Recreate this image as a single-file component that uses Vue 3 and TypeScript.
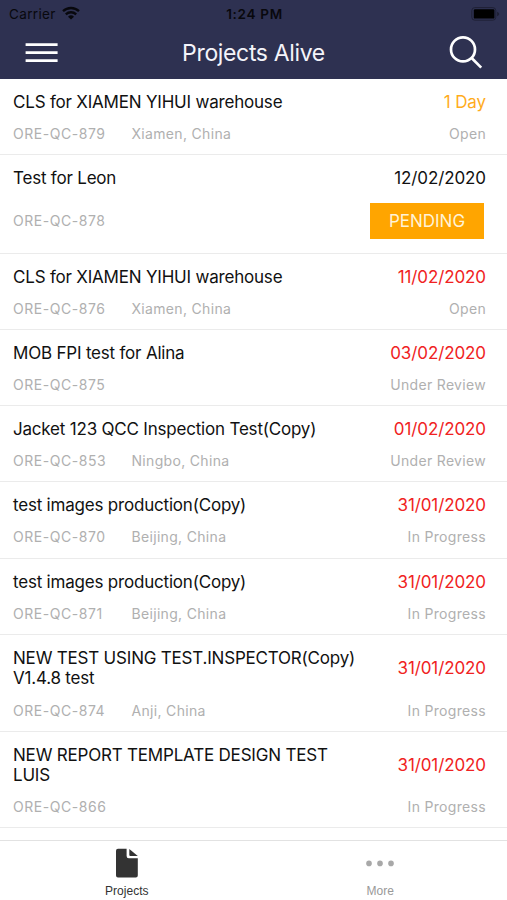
<script setup lang="ts">
type Tone = 'soon' | 'normal' | 'late'

interface Project {
  title: string
  code: string
  place?: string
  due: string
  tone: Tone
  status: string
  pending?: boolean
}

const projects: Project[] = [
  { title: 'CLS for XIAMEN YIHUI warehouse', code: 'ORE-QC-879', place: 'Xiamen, China', due: '1 Day', tone: 'soon', status: 'Open' },
  { title: 'Test for Leon', code: 'ORE-QC-878', due: '12/02/2020', tone: 'normal', status: 'PENDING', pending: true },
  { title: 'CLS for XIAMEN YIHUI warehouse', code: 'ORE-QC-876', place: 'Xiamen, China', due: '11/02/2020', tone: 'late', status: 'Open' },
  { title: 'MOB FPI test for Alina', code: 'ORE-QC-875', due: '03/02/2020', tone: 'late', status: 'Under Review' },
  { title: 'Jacket 123 QCC Inspection Test(Copy)', code: 'ORE-QC-853', place: 'Ningbo, China', due: '01/02/2020', tone: 'late', status: 'Under Review' },
  { title: 'test images production(Copy)', code: 'ORE-QC-870', place: 'Beijing, China', due: '31/01/2020', tone: 'late', status: 'In Progress' },
  { title: 'test images production(Copy)', code: 'ORE-QC-871', place: 'Beijing, China', due: '31/01/2020', tone: 'late', status: 'In Progress' },
  { title: 'NEW TEST USING TEST.INSPECTOR(Copy) V1.4.8 test', code: 'ORE-QC-874', place: 'Anji, China', due: '31/01/2020', tone: 'late', status: 'In Progress' },
  { title: 'NEW REPORT TEMPLATE DESIGN TEST LUIS', code: 'ORE-QC-866', due: '31/01/2020', tone: 'late', status: 'In Progress' },
]
</script>

<template>
  <div class="screen">
    <header class="top">
      <div class="statusbar">
        <div class="carrier">
          <span>Carrier</span>
          <svg class="wifi" viewBox="0 0 18 14" width="18" height="14">
            <path d="M1 5.2a11.6 11.6 0 0 1 16 0" />
            <path d="M3.8 8.3a7.6 7.6 0 0 1 10.4 0" />
            <path class="dot" d="M9 13.6 6 10.7a4.3 4.3 0 0 1 6 0Z" />
          </svg>
        </div>
        <span class="clock">1:24 PM</span>
        <svg class="battery" viewBox="0 0 29 14" width="29" height="14">
          <rect class="shell" x=".8" y=".6" width="24" height="12.6" rx="3" />
          <rect x="2.8" y="2.2" width="20.6" height="9.4" rx="1.2" />
          <path class="cap" d="M26 4.8c1.6.6 2.2 1.3 2.2 2.2s-.6 1.6-2.2 2.2Z" />
        </svg>
      </div>
      <div class="navbar">
        <button class="icon-button" type="button">
          <svg viewBox="0 0 34 22" width="34" height="22">
            <path class="bars" d="M1.6 2.6H33.6M1.6 10.6H33.6M1.6 18.7H33.6" />
          </svg>
        </button>
        <h1>Projects Alive</h1>
        <button class="icon-button" type="button">
          <svg viewBox="0 0 36 36" width="36" height="36">
            <circle class="lens" cx="15" cy="14.4" r="12" />
            <path class="lens" d="M23.4 22.8 33.2 32.6" />
          </svg>
        </button>
      </div>
    </header>

    <main class="list">
      <article v-for="p in projects" :key="p.code" class="row">
        <div class="line">
          <h2>{{ p.title }}</h2>
          <span class="due" :class="p.tone">{{ p.due }}</span>
        </div>
        <div class="line meta" :class="{ tall: p.pending }">
          <span class="code">{{ p.code }}</span>
          <span class="place">{{ p.place }}</span>
          <span :class="p.pending ? 'badge' : 'status'">{{ p.status }}</span>
        </div>
      </article>
    </main>

    <nav class="tabs">
      <a class="tab active">
        <svg viewBox="0 0 24 30" width="24" height="30">
          <path d="M3 .8H11.6V8.1A2.2 2.2 0 0 0 13.8 10.3H22.8V27.4A2 2 0 0 1 20.8 29.4H3A2 2 0 0 1 1 27.4V2.8A2 2 0 0 1 3 .8Z" />
          <path d="M14.3 1 22.8 7.9H15.3A1 1 0 0 1 14.3 6.9Z" />
        </svg>
        <span>Projects</span>
      </a>
      <a class="tab">
        <svg viewBox="0 0 30 30" width="30" height="30">
          <circle cx="4" cy="15.4" r="2.8" />
          <circle cx="15" cy="15.4" r="2.8" />
          <circle cx="26" cy="15.4" r="2.8" />
        </svg>
        <span>More</span>
      </a>
    </nav>
  </div>
</template>

<style>
body {
  background: #fff;
}
</style>

<style scoped>
.screen {
  display: flex;
  flex-direction: column;
  height: 900px;
  overflow: hidden;
  font-family: Inter, "Liberation Sans", sans-serif;
  color: #111;
}
h1,
h2 {
  margin: 0;
  font-weight: 400;
}
.top {
  flex: none;
  height: 79px;
  background: #2e3151;
}
.statusbar {
  display: grid;
  grid-template-columns: 1fr auto 1fr;
  align-items: center;
  height: 27px;
  padding: 0 7px 0 9px;
  font-size: 13.5px;
  color: #08080d;
}
.carrier {
  display: flex;
  align-items: center;
  gap: 6px;
  letter-spacing: 0.35px;
}
.wifi {
  margin-top: -2px;
  fill: none;
  stroke: #08080d;
  stroke-width: 2.3;
}
.wifi .dot {
  fill: #08080d;
  stroke: none;
}
.clock {
  font-weight: 600;
  letter-spacing: 0.7px;
}
.battery {
  justify-self: end;
  fill: #000;
}
.battery .shell {
  fill: none;
  stroke: #1f2136;
}
.battery .cap {
  fill: #1f2136;
}
.navbar {
  display: grid;
  grid-template-columns: 60px 1fr 60px;
  align-items: center;
  height: 52px;
  padding: 0 11px;
}
.navbar h1 {
  font-size: 23px;
  line-height: 28px;
  letter-spacing: -0.35px;
  text-align: center;
  color: #f4f4fa;
}
.icon-button {
  display: flex;
  align-items: center;
  justify-content: center;
  height: 44px;
  padding: 0;
  border: 0;
  background: none;
}
.bars,
.lens {
  fill: none;
  stroke: #fff;
  stroke-width: 2.7;
}
.list {
  flex: 1;
  min-height: 0;
  overflow: hidden;
}
.row {
  padding: 13px 21px 10.1px 13px;
  border-bottom: 1px solid #ebebeb;
}
.line {
  display: flex;
  align-items: center;
}
.line h2 {
  flex: 1;
  max-width: 350px;
  margin-right: auto;
  font-size: 17px;
  line-height: 20.7px;
  letter-spacing: -0.2px;
}
.due {
  font-size: 17px;
  line-height: 20.7px;
  letter-spacing: -0.1px;
}
.due.soon {
  color: #ffac1c;
}
.due.late {
  color: #f02222;
}
.meta {
  height: 21px;
  margin-top: 10.4px;
  font-size: 14px;
  letter-spacing: 0.32px;
  color: #b0b0b0;
}
.meta.tall {
  height: 43.4px;
}
.code {
  width: 118.5px;
  letter-spacing: 0.54px;
}
.place {
  flex: 1;
}
.badge {
  display: flex;
  align-items: center;
  justify-content: center;
  width: 114px;
  height: 35.5px;
  margin-right: 2px;
  background: #ffa500;
  font-size: 17px;
  letter-spacing: 0;
  color: #fff3d6;
}
.tabs {
  flex: none;
  display: grid;
  grid-template-columns: 1fr 1fr;
  height: 60px;
  box-sizing: border-box;
  border-top: 1px solid #e2e2e2;
  background: #fff;
}
.tab {
  display: flex;
  flex-direction: column;
  align-items: center;
  gap: 6px;
  padding-top: 7px;
  font-family: "Liberation Sans", sans-serif;
  font-size: 12px;
  line-height: 14px;
  letter-spacing: 0.05px;
  color: #999;
  fill: #a8a8a8;
}
.tab.active {
  color: #333;
  fill: #333;
}
</style>
